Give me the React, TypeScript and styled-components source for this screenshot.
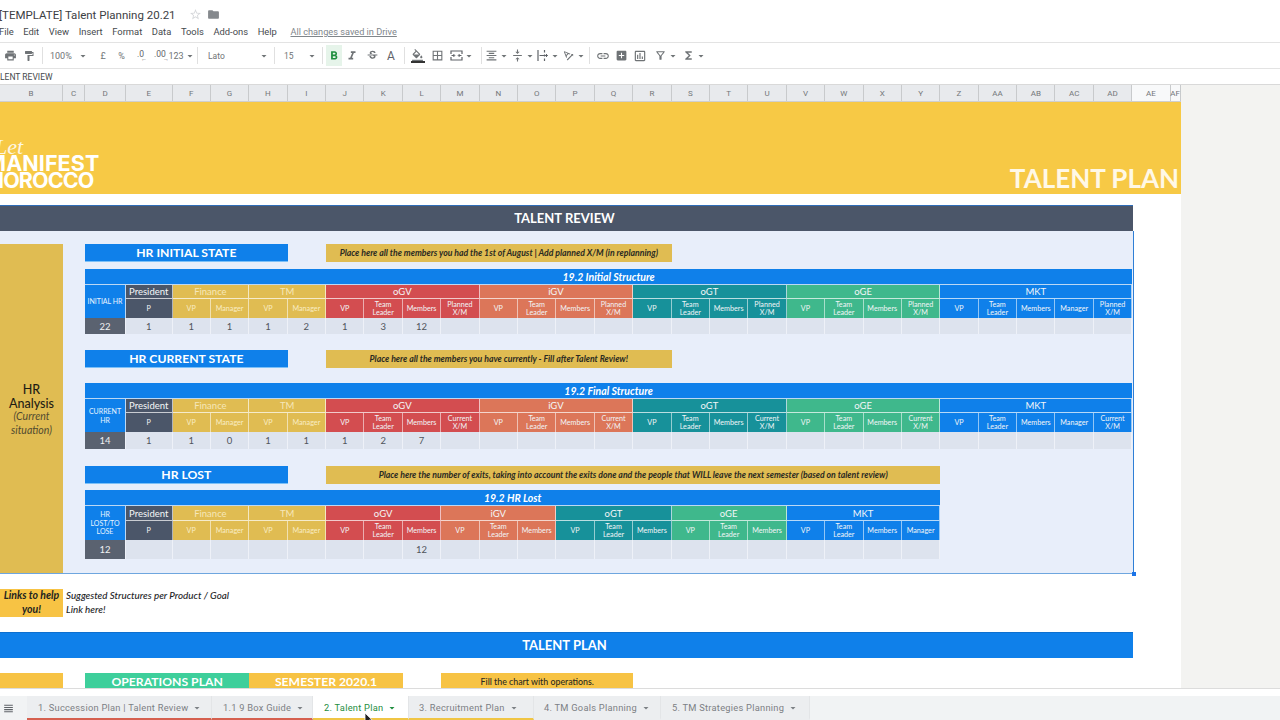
import React from 'react';
import styled, { createGlobalStyle } from 'styled-components';
import {
  MdPrint, MdFormatPaint, MdFormatBold, MdFormatItalic, MdStrikethroughS, MdFormatColorFill,
  MdBorderAll, MdFormatAlignCenter, MdVerticalAlignCenter,
  MdTextRotationAngleup, MdLink, MdAddBox, MdOutlineInsertChart, MdOutlineFilterAlt, MdFunctions,
  MdStarBorder, MdFolder, MdArrowDropDown, MdViewHeadline,
} from 'react-icons/md';

const FONT = `Lato, "Noto Sans", sans-serif`;
const UI = `Roboto, "Liberation Sans", sans-serif`;
const TONES: Record<string, string> = {
  blue: '#0f80ea', dark: '#4b5669', gold: '#e0bc52', red: '#d34d50',
  orange: '#dc7659', teal: '#17919a', green: '#3fb88c', slate: '#5a6270',
};

const Global = createGlobalStyle`
  html, body { margin: 0; padding: 0; background: #fff; overflow: hidden; }
  #root { width: 1280px; height: 720px; overflow: hidden; }
  * { box-sizing: border-box; }
`;

const Page = styled.div`
  width: 1280px; height: 720px; display: flex; flex-direction: column;
  position: relative; overflow: hidden; background: #fff; font-family: ${UI};
`;
const TitleRow = styled.div`
  height: 24px; display: flex; align-items: center; padding-top: 5px; margin-left: -1px;
  font-size: 11.5px; color: #3c4043; white-space: nowrap;
`;
const StarIcon = styled(MdStarBorder)` margin-left: 13px; color: #d5d7da; font-size: 13px; `;
const FolderIcon = styled(MdFolder)` margin-left: 5px; color: #85898d; font-size: 13px; `;
const MenuRow = styled.div`
  height: 18px; display: flex; align-items: center; gap: 9.6px; margin-left: -1px; padding-bottom: 4px;
  font-size: 9.4px; color: #45494d;
`;
const SavedNote = styled.span`
  margin-left: 4px; color: #80868b; font-size: 9.2px; text-decoration: underline;
`;
const Toolbar = styled.div`
  height: 27px; display: flex; align-items: center;
  border-top: 1px solid #e3e3e3; border-bottom: 1px solid #e3e3e3; color: #5f6368;
`;
const Tool = styled.div<{ $w: number; $start?: boolean; $active?: boolean }>`
  width: ${p => p.$w}px; height: 21px; flex: none; display: flex; align-items: center;
  justify-content: ${p => (p.$start ? 'flex-start' : 'center')};
  font-size: ${p => (p.$start ? '8.5px' : '9px')}; color: #6f7376;
  background: ${p => (p.$active ? '#e6f4ea' : 'transparent')};
  & > svg { flex: none; }
`;
const Sep = styled.div`
  width: 1px; height: 17px; background: #e0e0e0; flex: none;
`;
const SepSlot = styled.div<{ $w: number }>`
  width: ${p => p.$w}px; flex: none; display: flex; justify-content: center;
`;
const ToolText = styled.span<{ $pad?: number; $fill?: boolean }>`
  padding-left: ${p => p.$pad ?? 0}px; ${p => (p.$fill ? 'flex: 1;' : '')}
`;
const DecimalMark = styled.span<{ $arrow: string }>`
  position: relative; font-size: 8.5px; color: #5f6368; line-height: 10px; margin-top: -3px;
  &::after {
    content: '${p => p.$arrow}'; position: absolute; right: -3px; top: 7px; font-size: 6px; line-height: 6px;
  }
`;
const TextColorA = styled.span` font-size: 12px; color: #5f6368; `;
const FillStack = styled.div` display: flex; flex-direction: column; align-items: center; width: 14px; `;
const FillSwatch = styled.div` width: 14px; height: 2px; background: #333; margin-top: -1px; `;
const FormulaBar = styled.div`
  height: 16px; display: flex; align-items: center; font-size: 8.5px; color: #44484c;
  border-bottom: 1px solid #d9d9d9;
`;
const Workspace = styled.div` display: flex; flex: 1; min-height: 0; border-bottom: 1px solid #dcdcdc; `;
const Canvas = styled.div` width: 1181px; flex: none; overflow: hidden; `;
const Filler = styled.div` flex: 1; background: #f3f3f1; `;

const COLS = `63px 22px 41px 46.5px repeat(26, 38.4px) 10px`;
const ColHeader = styled.div`
  display: grid; grid-template-columns: ${COLS}; height: 17px; border-bottom: 1px solid #cfcfcf;
`;
const ColCell = styled.div<{ $plain?: boolean }>`
  display: flex; align-items: center; justify-content: center; font-size: 8px; color: #74777a;
  background: ${p => (p.$plain ? '#f8f9fa' : '#e8eaed')}; border-right: 1px solid #c8cacc;
`;
const Banner = styled.div`
  height: 92px; background: #f7c945; display: flex; justify-content: space-between;
  align-items: flex-end; overflow: hidden;
`;
const Logo = styled.div`
  color: #fff; font-family: Inter, sans-serif; font-weight: 700; display: flex;
  flex-direction: column; padding-bottom: 6px; white-space: nowrap;
`;
const LogoScript = styled.span`
  font-family: "Liberation Serif", serif; font-style: italic; font-weight: 400;
  font-size: 22px; line-height: 16px; margin-left: -5px; opacity: .85;
`;
const LogoLine = styled.span<{ $shift: number; $track: number }>`
  font-size: 21.5px; line-height: 16.5px; letter-spacing: ${p => p.$track}px; margin-left: ${p => p.$shift}px;
`;
const BannerTitle = styled.div`
  font-family: ${FONT}; font-size: 26px; font-weight: 700; color: #fff8e6; line-height: 32px;
  padding: 0 2px 0 0; white-space: nowrap;
`;
const HeadBand = styled.div<{ $tone: string; $top: number; $edge: string }>`
  width: 1133px; height: 26px; margin-top: ${p => p.$top}px; background: ${p => TONES[p.$tone]};
  border-top: 1px solid ${p => p.$edge}; display: flex; align-items: center; justify-content: center;
  padding: 0 4px 2px 0; color: #fff; font-family: ${FONT}; font-weight: 700; font-size: 13px;
`;
const Section = styled.div`
  width: 1134px; height: 343px; background: #e8eefa; display: flex; position: relative;
  border-right: 1px solid #2f7fd6; border-bottom: 1px solid #6ea6df; font-family: ${FONT};
`;
const Handle = styled.div`
  position: absolute; right: -3px; bottom: -3px; width: 4px; height: 4px; background: #1a73e8;
`;
const Analysis = styled.div`
  width: 63px; height: 329px; margin: 13px 22px 0 0; background: #e0bc52; flex: none; padding-top: 3px;
  display: flex; flex-direction: column; align-items: center; justify-content: center;
  text-align: center; color: #1f1d14; font-size: 12.5px; line-height: 13.5px; font-weight: 500;
`;
const AnalysisNote = styled.em` font-size: 10.5px; line-height: 13.5px; font-weight: 400; color: #514a30; `;
const SectionBody = styled.div` display: flex; flex-direction: column; padding-top: 13px; `;
const HeadRow = styled.div<{ $top?: number }>`
  display: grid; grid-template-columns: 41px 46.5px repeat(25, 38.4px); height: 18px;
  margin-top: ${p => p.$top ?? 0}px;
`;
const StateBar = styled.div`
  grid-column: span 5; background: ${TONES.blue}; color: #fff; font-weight: 700; font-size: 12.2px;
  display: flex; align-items: center; justify-content: center; border-bottom: 1px solid #7cc0f7;
  padding-bottom: 1px;
`;
const Gap = styled.div<{ $span: number }>` grid-column: span ${p => p.$span}; `;
const Notice = styled.div<{ $span: number }>`
  grid-column: span ${p => p.$span}; background: #e0bc52; color: #2a2a22; font-style: italic;
  font-weight: 700; font-size: 8.7px; display: flex; align-items: center; justify-content: center;
  white-space: nowrap; padding-bottom: 1px;
`;
const Table = styled.div<{ $n: number; $top: number; $group: number; $data: number }>`
  display: grid; margin-top: ${p => p.$top}px;
  grid-template-columns: 41px 46.5px repeat(${p => p.$n}, 38.4px);
  grid-template-rows: 16px ${p => p.$group}px 19px ${p => p.$data}px; color: #fff;
`;
const TableTitle = styled.div`
  grid-column: 1 / -1; background: ${TONES.blue}; font-weight: 700; font-style: italic; font-size: 10.5px;
  display: flex; align-items: center; justify-content: center; border-bottom: 1px solid #bcd8f4;
`;
const CornerCell = styled.div`
  grid-row: span 2; background: ${TONES.blue}; font-size: 7px; font-weight: 400; line-height: 8.5px;
  color: #e8f4ff; display: flex; align-items: center; justify-content: center; text-align: center;
  border-right: 1px solid #bcd8f4;
`;
const GroupCell = styled.div<{ $span: number; $tone: string }>`
  grid-column: span ${p => p.$span}; background: ${p => TONES[p.$tone]}; font-size: 9.5px;
  color: ${p => (p.$tone === 'gold' ? '#f6e7b8' : '#f4f6f8')};
  display: flex; align-items: center; justify-content: center;
  border-right: 1px solid rgba(255, 255, 255, .65); border-bottom: 1px solid rgba(255, 255, 255, .7);
`;
const SubCell = styled.div<{ $tone: string }>`
  background: ${p => TONES[p.$tone]}; font-size: 7.2px; line-height: 8px; text-align: center;
  color: ${p => (p.$tone === 'gold' ? '#f9ecc4' : '#f2f5f7')};
  display: flex; align-items: center; justify-content: center;
  border-right: 1px solid rgba(255, 255, 255, .55); padding: 0 1px;
`;
const DataCell = styled.div<{ $dark?: boolean }>`
  background: ${p => (p.$dark ? TONES.slate : '#dde3ee')}; color: ${p => (p.$dark ? '#f0f1f3' : '#50555c')};
  font-size: 9.5px; display: flex; align-items: center; justify-content: center;
  border-right: 1px solid #eef1f8;
`;
const LinkRow = styled.div`
  display: flex; height: 28px; margin-top: 15px; font-family: ${FONT}; font-style: italic;
  font-weight: 700; font-size: 10.5px; line-height: 14px; color: #23231f;
`;
const LinkBadge = styled.div`
  width: 63px; background: #f7c344; text-align: center; flex: none; line-height: 13.5px;
`;
const LinkText = styled.div` padding-left: 3px; font-weight: 500; font-size: 9.8px; line-height: 13.5px; `;
const OpsRow = styled.div`
  display: grid; grid-template-columns: ${COLS}; height: 15px; margin-top: 15px;
  font-family: ${FONT}; overflow: hidden;
`;
const OpsCell = styled.div<{ $span: number; $bg: string; $big?: boolean }>`
  grid-column: span ${p => p.$span}; background: ${p => p.$bg};
  color: ${p => (p.$big ? '#fff' : '#2a2a22')}; font-size: ${p => (p.$big ? '12.2px' : '8.8px')};
  font-weight: ${p => (p.$big ? 700 : 500)}; display: flex; align-items: center; justify-content: center;
  white-space: nowrap; padding-top: ${p => (p.$big ? 1 : 0)}px;
`;
const TabBar = styled.div`
  height: 24px; margin-top: 7px; background: #f1f3f4; display: flex; flex: none; font-size: 9.3px;
  letter-spacing: .25px;
`;
const SheetsButton = styled.div`
  width: 27px; display: flex; align-items: center; padding-left: 2px; color: #5f6368; font-size: 13px;
`;
const Tab = styled.div<{ $w: number; $pad: number; $active?: boolean; $line?: string }>`
  width: ${p => p.$w}px; display: flex; align-items: center; gap: 3px; padding: 1px 0 0 ${p => p.$pad}px;
  background: ${p => (p.$active ? '#fff' : '#eceef0')}; color: ${p => (p.$active ? '#1e8e3e' : '#7c8084')};
  border-right: 1px solid #e3e5e7; border-bottom: 2px solid ${p => p.$line ?? 'transparent'};
  white-space: nowrap;
`;
const TabCaret = styled(MdArrowDropDown)` font-size: 12px; flex: none; `;
const Cursor = styled.svg`
  position: absolute; left: 364px; top: 712px; width: 9px; height: 13px;
`;

const Caret = () => <MdArrowDropDown size={12} />;

const MergeIcon = () => (
  <svg width="13" height="13" viewBox="0 0 13 13" fill="none" stroke="#5f6368" strokeWidth="1.2">
    <path d="M1 5V2h11v3M1 8v3h11V8" />
    <path d="M1.5 6.5h3M3.4 5l1.4 1.5L3.4 8M11.5 6.5h-3M9.6 5 8.2 6.5 9.6 8" strokeWidth="1" />
  </svg>
);
const WrapIcon = () => (
  <svg width="13" height="13" viewBox="0 0 13 13" fill="none" stroke="#5f6368" strokeWidth="1.2">
    <path d="M2 1v11" />
    <path d="M8.5 1v2.5M8.5 5.5v2M8.5 9.5V12" />
    <path d="M3.5 6.5h8M10 5l1.5 1.5L10 8" strokeWidth="1" />
  </svg>
);

type Group = { label: string; tone: string; subs: string[] };
const TL = 'Team Leader';
const makeGroups = (last: string): Group[] => [
  { label: 'President', tone: 'dark', subs: ['P'] },
  { label: 'Finance', tone: 'gold', subs: ['VP', 'Manager'] },
  { label: 'TM', tone: 'gold', subs: ['VP', 'Manager'] },
  { label: 'oGV', tone: 'red', subs: ['VP', TL, 'Members', last] },
  { label: 'iGV', tone: 'orange', subs: ['VP', TL, 'Members', last] },
  { label: 'oGT', tone: 'teal', subs: ['VP', TL, 'Members', last] },
  { label: 'oGE', tone: 'green', subs: ['VP', TL, 'Members', last] },
  { label: 'MKT', tone: 'blue', subs: ['VP', TL, 'Members', 'Manager', last] },
];
const lostGroups: Group[] = [
  { label: 'President', tone: 'dark', subs: ['P'] },
  { label: 'Finance', tone: 'gold', subs: ['VP', 'Manager'] },
  { label: 'TM', tone: 'gold', subs: ['VP', 'Manager'] },
  { label: 'oGV', tone: 'red', subs: ['VP', TL, 'Members'] },
  { label: 'iGV', tone: 'orange', subs: ['VP', TL, 'Members'] },
  { label: 'oGT', tone: 'teal', subs: ['VP', TL, 'Members'] },
  { label: 'oGE', tone: 'green', subs: ['VP', TL, 'Members'] },
  { label: 'MKT', tone: 'blue', subs: ['VP', TL, 'Members', 'Manager'] },
];

const StructureTable = ({ title, corner, groups, total, values, top, group, data }: {
  title: string; corner: React.ReactNode; groups: Group[]; total: string; values: string[];
  top: number; group: number; data: number;
}) => {
  const subs = groups.flatMap(g => g.subs.map(s => ({ s, tone: g.tone })));
  return (
    <Table $n={subs.length - 1} $top={top} $group={group} $data={data}>
      <TableTitle>{title}</TableTitle>
      <CornerCell>{corner}</CornerCell>
      {groups.map(g => <GroupCell key={g.label} $span={g.subs.length} $tone={g.tone}>{g.label}</GroupCell>)}
      {subs.map((c, i) => <SubCell key={i} $tone={c.tone}>{c.s}</SubCell>)}
      <DataCell $dark>{total}</DataCell>
      {subs.map((_, i) => <DataCell key={i}>{values[i] ?? ''}</DataCell>)}
    </Table>
  );
};

const columns = ['B','C','D','E','F','G','H','I','J','K','L','M','N','O','P','Q','R','S','T','U','V','W','X','Y','Z','AA','AB','AC','AD','AE','AF'];
const tabs = [
  { label: '1. Succession Plan | Talent Review', w: 185, pad: 11, line: '#d5604f' },
  { label: '1.1 9 Box Guide', w: 101, pad: 11, line: '#d5604f' },
  { label: '2.  Talent Plan', w: 96, pad: 11, active: true, line: '#f0c544' },
  { label: '3.  Recruitment Plan', w: 125, pad: 10, line: '#f0c544' },
  { label: '4. TM Goals Planning', w: 127, pad: 10 },
  { label: '5. TM Strategies Planning', w: 149, pad: 11 },
];

export default function App() {
  return (
    <Page>
      <Global />
      <TitleRow>[TEMPLATE] Talent Planning 20.21<StarIcon /><FolderIcon /></TitleRow>
      <MenuRow>
        {['File', 'Edit', 'View', 'Insert', 'Format', 'Data', 'Tools', 'Add-ons', 'Help'].map(m => <span key={m}>{m}</span>)}
        <SavedNote>All changes saved in Drive</SavedNote>
      </MenuRow>
      <Toolbar>
        <Tool $w={20}><MdPrint size={13} /></Tool>
        <Tool $w={18}><MdFormatPaint size={12} /></Tool>
        <SepSlot $w={8}><Sep /></SepSlot>
        <Tool $w={43}><ToolText $pad={4} $fill>100%</ToolText><Caret /></Tool>
        <Tool $w={5} />
        <Tool $w={18}>£</Tool>
        <Tool $w={19}>%</Tool>
        <Tool $w={19}><DecimalMark $arrow="←">.0</DecimalMark></Tool>
        <Tool $w={20}><DecimalMark $arrow="→">.00</DecimalMark></Tool>
        <Tool $w={24}>123<Caret /></Tool>
        <SepSlot $w={7}><Sep /></SepSlot>
        <Tool $w={69} $start><ToolText $pad={7} $fill>Lato</ToolText><Caret /></Tool>
        <SepSlot $w={8}><Sep /></SepSlot>
        <Tool $w={40} $start><ToolText $pad={6} $fill>15</ToolText><Caret /></Tool>
        <SepSlot $w={8}><Sep /></SepSlot>
        <Tool $w={16} $active><MdFormatBold size={14} color="#1e8e3e" /></Tool>
        <Tool $w={20}><MdFormatItalic size={14} /></Tool>
        <Tool $w={20}><MdStrikethroughS size={13} /></Tool>
        <Tool $w={18}><TextColorA>A</TextColorA></Tool>
        <SepSlot $w={8}><Sep /></SepSlot>
        <Tool $w={19}><FillStack><MdFormatColorFill size={13} /><FillSwatch /></FillStack></Tool>
        <Tool $w={20}><MdBorderAll size={13} /></Tool>
        <Tool $w={30} $start><ToolText $pad={3} /><MergeIcon /><Caret /></Tool>
        <SepSlot $w={8}><Sep /></SepSlot>
        <Tool $w={26} $start><MdFormatAlignCenter size={13} /><Caret /></Tool>
        <Tool $w={25} $start><MdVerticalAlignCenter size={13} /><Caret /></Tool>
        <Tool $w={26} $start><WrapIcon /><Caret /></Tool>
        <Tool $w={23} $start><MdTextRotationAngleup size={13} /><Caret /></Tool>
        <SepSlot $w={8}><Sep /></SepSlot>
        <Tool $w={19}><MdLink size={14} /></Tool>
        <Tool $w={18}><MdAddBox size={13} /></Tool>
        <Tool $w={20}><MdOutlineInsertChart size={14} /></Tool>
        <Tool $w={32}><MdOutlineFilterAlt size={13} /><Caret /></Tool>
        <Tool $w={24}><MdFunctions size={13} /><Caret /></Tool>
      </Toolbar>
      <FormulaBar>LENT REVIEW</FormulaBar>
      <Workspace>
        <Canvas>
          <ColHeader>
            {columns.map(c => <ColCell key={c} $plain={c === 'AE' || c === 'AF'}>{c}</ColCell>)}
          </ColHeader>
          <Banner>
            <Logo>
              <LogoScript>Let</LogoScript>
              <LogoLine $shift={-14} $track={0.1}>MANIFEST</LogoLine>
              <LogoLine $shift={-16} $track={-0.9}>MOROCCO</LogoLine>
            </Logo>
            <BannerTitle>TALENT PLAN</BannerTitle>
          </Banner>
          <HeadBand $tone="dark" $top={11} $edge="#2f6db8">TALENT REVIEW</HeadBand>
          <Section>
            <Analysis>
              HR Analysis
              <AnalysisNote>(Current situation)</AnalysisNote>
            </Analysis>
            <SectionBody>
              <HeadRow>
                <StateBar>HR INITIAL STATE</StateBar>
                <Gap $span={1} />
                <Notice $span={9}>Place here all the members you had the 1st of August | Add planned X/M (in replanning)</Notice>
              </HeadRow>
              <StructureTable top={7} group={14} data={16} title="19.2 Initial Structure" corner="INITIAL HR" groups={makeGroups('Planned X/M')}
                total="22" values={['1', '1', '1', '1', '2', '1', '3', '12']} />
              <HeadRow $top={16}>
                <StateBar>HR CURRENT STATE</StateBar>
                <Gap $span={1} />
                <Notice $span={9}>Place here all the members you have currently - Fill after Talent Review!</Notice>
              </HeadRow>
              <StructureTable top={15} group={14} data={17} title="19.2 Final Structure" corner={<>CURRENT<br />HR</>} groups={makeGroups('Current X/M')}
                total="14" values={['1', '1', '0', '1', '1', '1', '2', '7']} />
              <HeadRow $top={17}>
                <StateBar>HR LOST</StateBar>
                <Gap $span={1} />
                <Notice $span={16}>Place here the number of exits, taking into account the exits done and the people that WILL leave the next semester (based on talent review)</Notice>
              </HeadRow>
              <StructureTable top={6} group={15} data={19} title="19.2 HR Lost" corner={<>HR<br />LOST/TO<br />LOSE</>} groups={lostGroups}
                total="12" values={['', '', '', '', '', '', '', '12']} />
            </SectionBody>
            <Handle />
          </Section>
          <LinkRow>
            <LinkBadge>Links to help you!</LinkBadge>
            <LinkText>Suggested Structures per Product / Goal<br />Link here!</LinkText>
          </LinkRow>
          <HeadBand $tone="blue" $top={15} $edge="#0d6fcf">TALENT PLAN</HeadBand>
          <OpsRow>
            <OpsCell $span={1} $bg="#f7c344" />
            <Gap $span={1} />
            <OpsCell $span={4} $bg="#3ecf9b" $big>OPERATIONS PLAN</OpsCell>
            <OpsCell $span={4} $bg="#f7c344" $big>SEMESTER 2020.1</OpsCell>
            <Gap $span={1} />
            <OpsCell $span={5} $bg="#f7c344">Fill the chart with operations.</OpsCell>
          </OpsRow>
        </Canvas>
        <Filler />
      </Workspace>
      <TabBar>
        <SheetsButton><MdViewHeadline /></SheetsButton>
        {tabs.map(t => (
          <Tab key={t.label} $w={t.w} $pad={t.pad} $active={t.active} $line={t.line}>{t.label}<TabCaret /></Tab>
        ))}
      </TabBar>
      <Cursor viewBox="0 0 9 13"><path d="M1 1v10l2.5-2.3L5 12l1.6-.7-1.5-3.2H8.3z" fill="#222" stroke="#fff" strokeWidth=".8" /></Cursor>
    </Page>
  );
}
